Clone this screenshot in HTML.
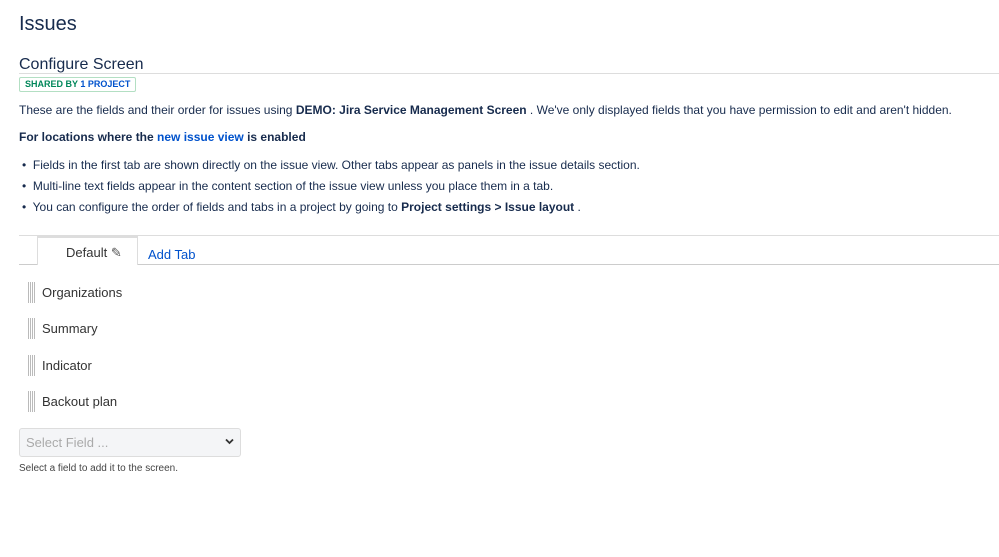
<!DOCTYPE html>
<html><head><style>
body{margin:0;background:#fff;font-family:"Liberation Sans",sans-serif;color:#172b4d;width:999px;height:557px;overflow:hidden;position:relative}
.a{position:absolute;white-space:nowrap}
.t{font-size:12px;color:#172b4d}
.grip{position:absolute;left:28px;width:7px;height:21px;background-image:linear-gradient(90deg,#aaa 1px,transparent 1px),linear-gradient(0deg,#fff 1px,transparent 1px);background-size:2px 2px;opacity:.8}
.f{position:absolute;left:42px;font-size:13px;color:#333}
</style></head><body>
<div class="a" style="left:19px;top:13px;font-size:20px;color:#172b4d">Issues</div>
<div class="a" style="left:19px;top:56px;font-size:16px;color:#172b4d">Configure Screen</div>
<div class="a" style="left:19px;top:73px;width:980px;height:1px;background:#ddd"></div>
<div class="a" style="left:19px;top:77px;height:13px;border:1px solid #b3dfc3;border-radius:2px;padding:0 5px;font-size:9px;font-weight:bold;line-height:13px;color:#00875a">SHARED BY <span style="color:#0052cc">1 PROJECT</span></div>
<div class="a t" style="left:19px;top:103px">These are the fields and their order for issues using <b>DEMO: Jira Service Management Screen</b> . We've only displayed fields that you have permission to edit and aren't hidden.</div>
<div class="a t" style="left:19px;top:130px;font-weight:bold">For locations where the <span style="color:#0052cc">new issue view</span> is enabled</div>
<div class="a t" style="left:22px;top:158px">•&nbsp; Fields in the first tab are shown directly on the issue view. Other tabs appear as panels in the issue details section.</div>
<div class="a t" style="left:22px;top:179px">•&nbsp; Multi-line text fields appear in the content section of the issue view unless you place them in a tab.</div>
<div class="a t" style="left:22px;top:200px">•&nbsp; You can configure the order of fields and tabs in a project by going to <b>Project settings &gt; Issue layout</b> .</div>
<div class="a" style="left:19px;top:235px;width:980px;height:1px;background:#ddd"></div>
<div class="a" style="left:19px;top:264px;width:980px;height:1px;background:#ccc"></div>
<div class="a" style="left:37px;top:236px;width:101px;height:29px;border-left:1px solid #ddd;border-right:1px solid #ddd;border-top:2px solid #ddd;background:#fff;box-sizing:border-box"></div>
<div class="a" style="left:66px;top:245px;font-size:13px;color:#333">Default <span style="color:#555">✎</span></div>
<div class="a" style="left:148px;top:247px;font-size:13px;color:#0052cc">Add Tab</div>
<div class="grip" style="top:282px"></div><div class="a f" style="top:285px">Organizations</div>
<div class="grip" style="top:318px"></div><div class="a f" style="top:321px">Summary</div>
<div class="grip" style="top:355px"></div><div class="a f" style="top:358px">Indicator</div>
<div class="grip" style="top:391px"></div><div class="a f" style="top:394px">Backout plan</div>
<div class="a" style="left:19px;top:428px;width:222px;height:29px;box-sizing:border-box;border:1px solid #ddd;border-radius:3px;background:#f4f5f7"></div>
<div class="a" style="left:26px;top:435px;font-size:13px;color:#aaa">Select Field ...</div>
<svg class="a" style="left:225px;top:438px" width="9" height="7" viewBox="0 0 9 7"><path d="M1 1.5 L4.5 5 L8 1.5" stroke="#333" stroke-width="1.8" fill="none"/></svg>
<div class="a" style="left:19px;top:463px;font-size:10px;color:#444">Select a field to add it to the screen.</div>
</body></html>
